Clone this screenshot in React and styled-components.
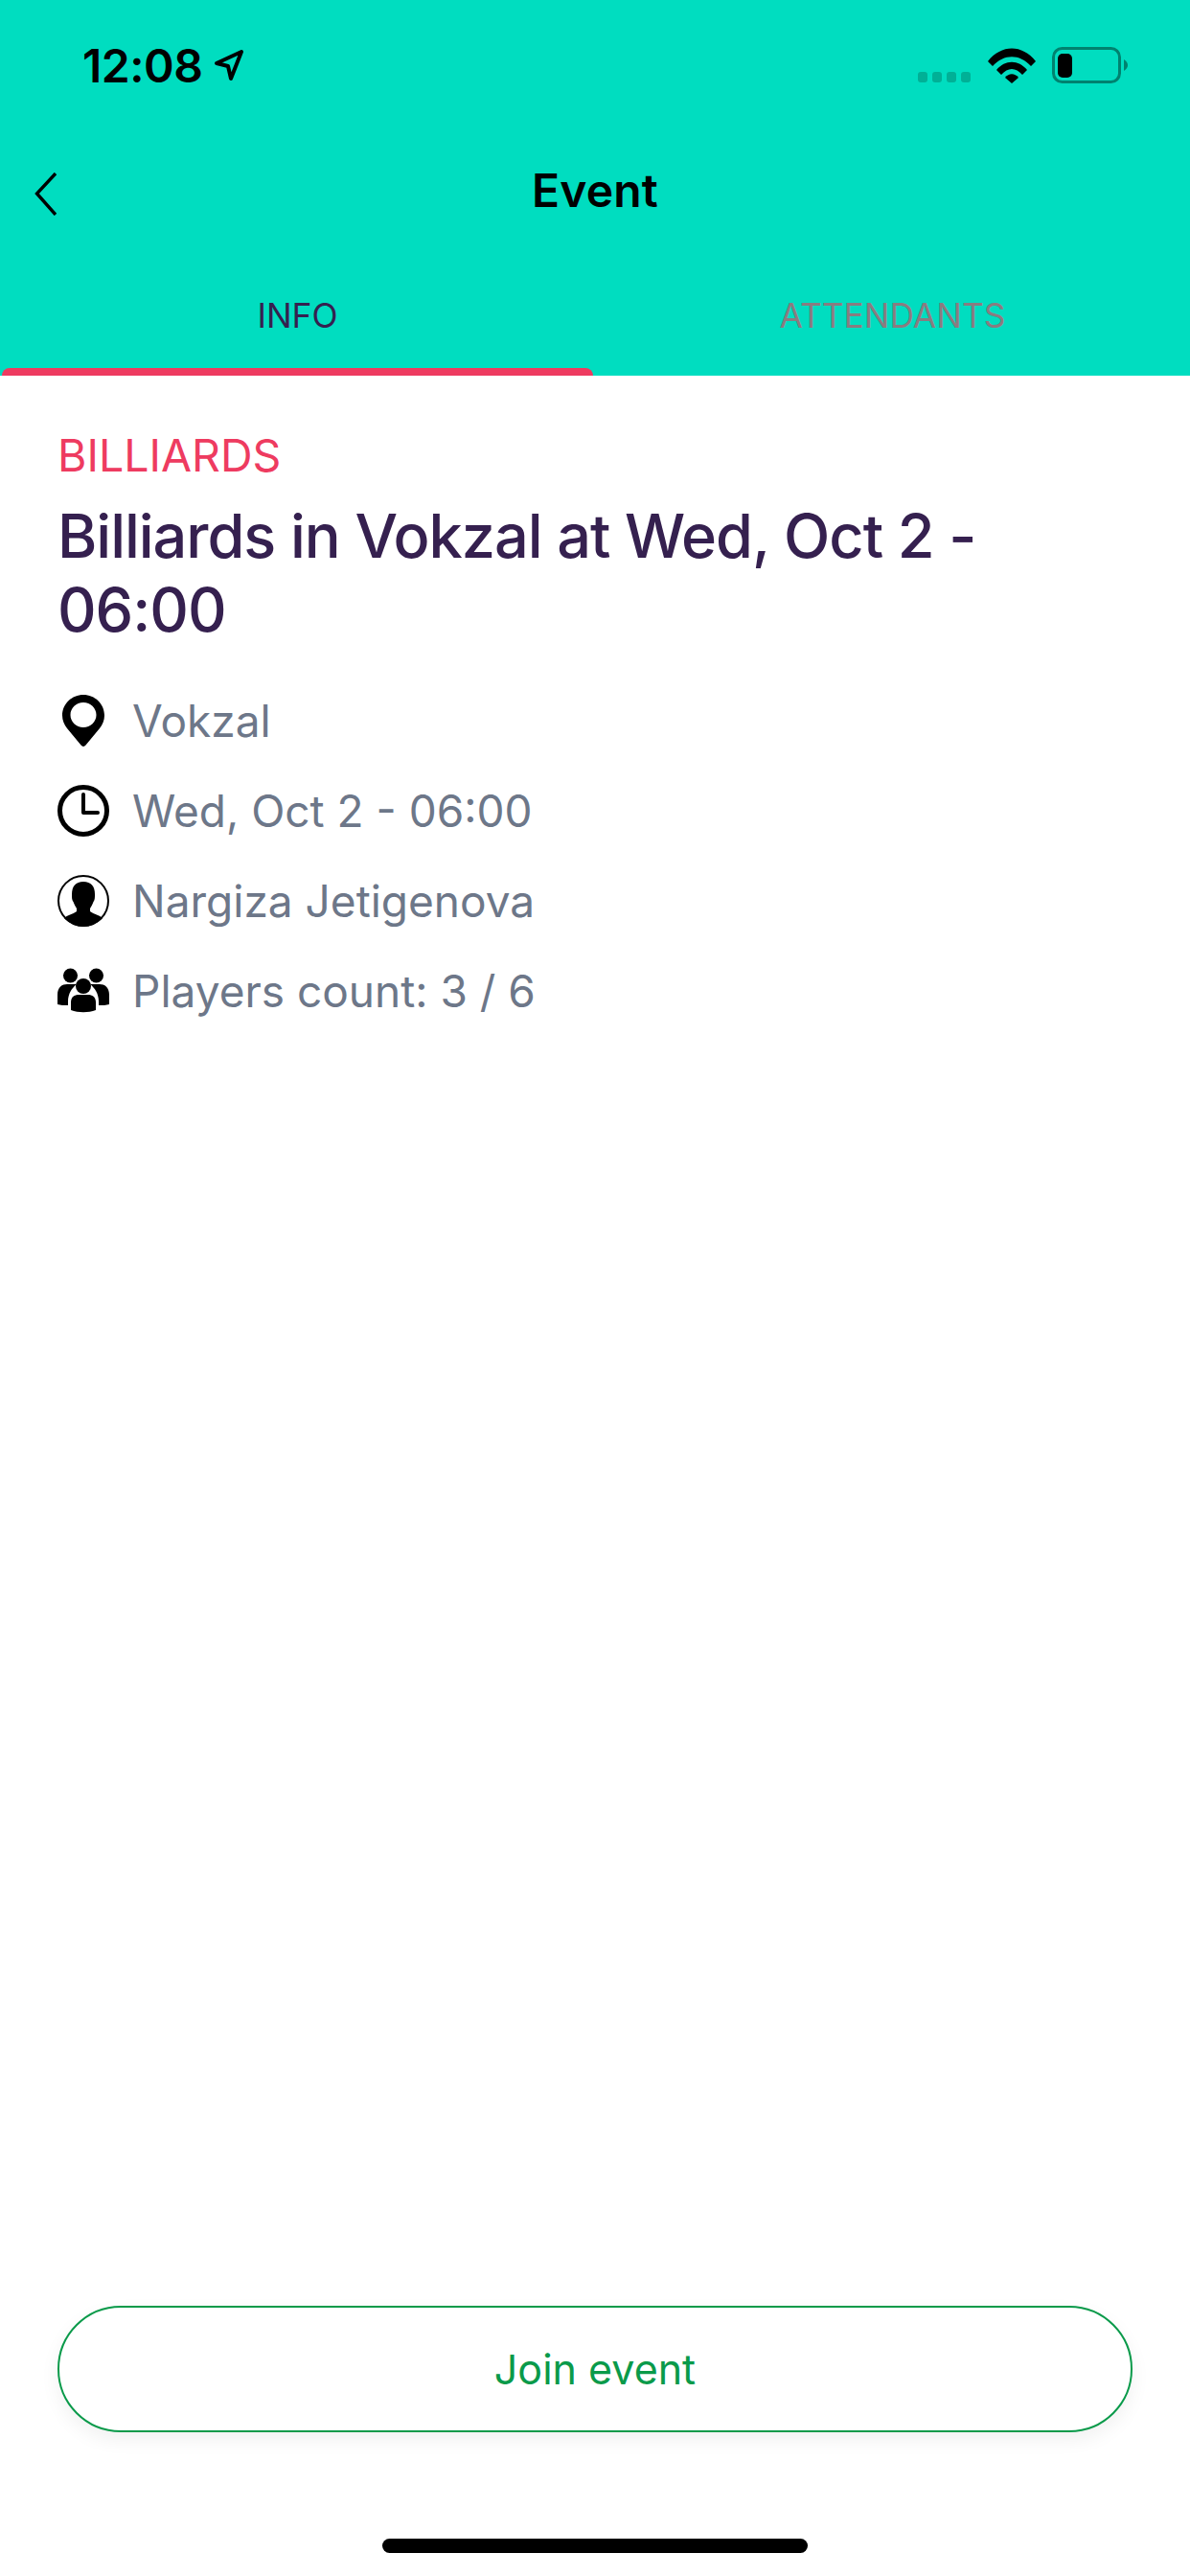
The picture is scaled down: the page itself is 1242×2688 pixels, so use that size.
import React from "react";
import styled, { createGlobalStyle } from "styled-components";

const GlobalStyle = createGlobalStyle`
  html, body {
    margin: 0;
    padding: 0;
    background: #ffffff;
  }
  * {
    box-sizing: border-box;
  }
`;

const Page = styled.div`
  display: flex;
  flex-direction: column;
  width: 1242px;
  height: 2688px;
  background: #ffffff;
  font-family: Inter, "Liberation Sans", sans-serif;
`;

const Header = styled.header`
  display: flex;
  flex-direction: column;
  height: 392px;
  background: #00ddc0;
`;

const StatusBar = styled.div`
  display: flex;
  justify-content: space-between;
  align-items: center;
  height: 136px;
  padding: 0 65px 0 86px;
`;

const Time = styled.div`
  display: flex;
  align-items: center;
  gap: 12px;
  font-size: 48px;
  font-weight: 600;
  letter-spacing: -0.5px;
  color: #000000;
`;

const StatusIcons = styled.div`
  display: flex;
  align-items: center;
  gap: 17px;
`;

const NavBar = styled.div`
  display: grid;
  grid-template-columns: 150px 1fr 150px;
  align-items: center;
  height: 124px;
`;

const BackButton = styled.div`
  display: flex;
  padding: 8px 0 0 36px;
`;

const Title = styled.h1`
  margin: 0;
  text-align: center;
  font-size: 48px;
  font-weight: 600;
  letter-spacing: 0.2px;
  color: #000000;
`;

const Tabs = styled.div`
  display: grid;
  flex: 1;
  grid-template-columns: 1fr 1fr;
`;

const Tab = styled.div`
  display: flex;
  flex-direction: column;
  justify-content: flex-end;
  align-items: center;
  font-size: 35.4px;
  color: ${(p) => (p.$active ? "#35204f" : "#897c80")};
`;

const Indicator = styled.div`
  align-self: stretch;
  height: 8px;
  margin: 33px 2px 0 2px;
  border-radius: 8px 8px 0 0;
  background: ${(p) => (p.$active ? "#ee3b60" : "transparent")};
`;

const Content = styled.main`
  display: flex;
  flex: 1;
  flex-direction: column;
  padding: 57px 60px 0;
`;

const Category = styled.div`
  font-size: 46.5px;
  line-height: 52px;
  color: #ee3b60;
`;

const EventTitle = styled.h2`
  margin: 20px 0 0;
  font-size: 63px;
  font-weight: 500;
  line-height: 77px;
  letter-spacing: -1.05px;
  color: #35204f;
`;

const InfoList = styled.div`
  display: flex;
  flex-direction: column;
  gap: 40px;
  margin-top: 50px;
`;

const InfoRow = styled.div`
  display: flex;
  align-items: center;
  gap: 24px;
  height: 54px;
  font-size: 46px;
  color: #6d7789;
`;

const IconBox = styled.svg`
  flex: none;
  width: 54px;
  height: 54px;
`;

const Footer = styled.footer`
  display: flex;
  flex-direction: column;
  align-items: center;
  height: 282px;
  padding: 0 60px;
`;

const JoinButton = styled.button`
  width: 100%;
  height: 132px;
  border: 2px solid #0a9a4a;
  border-radius: 66px;
  background: #ffffff;
  box-shadow: 0 8px 20px rgba(0, 0, 0, 0.06);
  font-family: inherit;
  font-size: 43px;
  color: #0a9a4a;
`;

const HomeBar = styled.div`
  width: 444px;
  height: 15px;
  margin-top: 111px;
  border-radius: 8px;
  background: #000000;
`;

function LocationArrow() {
  return (
    <svg width="32" height="34" viewBox="0 0 32 34">
      <path
        d="M3 15 L29 3 L18 31 L15 18 Z"
        fill="none"
        stroke="#000"
        strokeWidth="4"
        strokeLinejoin="round"
      />
    </svg>
  );
}

function SignalDots() {
  return (
    <svg width="56" height="36" viewBox="0 0 56 36">
      {[0, 15, 30, 45].map((x) => (
        <rect key={x} x={x} y="25" width="10" height="11" rx="3" fill="#00b096" />
      ))}
    </svg>
  );
}

function Wifi() {
  return (
    <svg width="50" height="37" viewBox="0 0 50 37">
      <path d="M0 14 C14 -4 36 -4 50 14 L45 19 C33 6 17 6 5 19 Z" fill="#000" />
      <path d="M9 23 C18 12 32 12 41 23 L36 28 C29 20 21 20 14 28 Z" fill="#000" />
      <path d="M18 31 C22 26 28 26 32 31 L25 37 Z" fill="#000" />
    </svg>
  );
}

function Battery() {
  return (
    <svg width="79" height="38" viewBox="0 0 79 38">
      <rect x="1.5" y="1.5" width="69" height="35" rx="9" fill="none" stroke="#00826f" strokeWidth="3" />
      <rect x="6" y="7" width="15" height="25" rx="5" fill="#000" />
      <path d="M75 13 C78 15 79 17 79 19 C79 21 78 23 75 25 Z" fill="#00826f" />
    </svg>
  );
}

function Chevron() {
  return (
    <svg width="23" height="45" viewBox="0 0 23 45">
      <path d="M22 1 L2.5 22 L22 44" fill="none" stroke="#000" strokeWidth="3.4" />
    </svg>
  );
}

function PinIcon() {
  return (
    <IconBox viewBox="0 0 54 54">
      <path
        fillRule="evenodd"
        d="M27 0 C39 0 49 9.5 49 21.5 C49 27 47 31 44 35 L29.5 52.5 C28 54.4 26 54.4 24.5 52.5 L10 35 C7 31 5 27 5 21.5 C5 9.5 15 0 27 0 Z M27 8 C19.5 8 13.5 13.8 13.5 21 C13.5 28.2 19.5 34 27 34 C34.5 34 40.5 28.2 40.5 21 C40.5 13.8 34.5 8 27 8 Z"
        fill="#000"
      />
    </IconBox>
  );
}

function ClockIcon() {
  return (
    <IconBox viewBox="0 0 54 54">
      <circle cx="27" cy="27" r="24.5" fill="none" stroke="#000" strokeWidth="5" />
      <path
        d="M27 10 V29 H42"
        fill="none"
        stroke="#000"
        strokeWidth="4"
        strokeLinecap="round"
        strokeLinejoin="round"
      />
    </IconBox>
  );
}

function PersonIcon() {
  return (
    <IconBox viewBox="0 0 54 54">
      <defs>
        <clipPath id="personClip">
          <circle cx="27" cy="27" r="27" />
        </clipPath>
      </defs>
      <circle cx="27" cy="27" r="26" fill="#fff" stroke="#000" strokeWidth="2" />
      <g clipPath="url(#personClip)">
        <path
          d="M27 7 C35 7 39 12 39 20 C39 24 39 26 37.5 28 C36.5 31 35 33 34 35 L34 38 C38 41 44 42 47 45 L47 54 L7 54 L7 45 C10 42 16 41 20 38 L20 35 C19 33 17.5 31 16.5 28 C15 26 15 24 15 20 C15 12 19 7 27 7 Z"
          fill="#000"
        />
      </g>
    </IconBox>
  );
}

function GroupIcon() {
  return (
    <IconBox viewBox="0 0 54 54">
      <circle cx="13.5" cy="11" r="7.5" fill="#000" />
      <circle cx="40.5" cy="11" r="7.5" fill="#000" />
      <path d="M0 41 L0 31 C0 23 5 20 10 20 L20 20 C15 24 11 30 11 38 L11 42 C7 42 3 42 0 41 Z" fill="#000" />
      <path d="M54 41 L54 31 C54 23 49 20 44 20 L34 20 C39 24 43 30 43 38 L43 42 C47 42 51 42 54 41 Z" fill="#000" />
      <circle cx="27" cy="22" r="8" fill="#000" />
      <path d="M14 47 L14 39 C14 33 18 31 22 31 L32 31 C36 31 40 33 40 39 L40 47 C32 50 22 50 14 47 Z" fill="#000" />
    </IconBox>
  );
}

const infoRows = [
  { icon: <PinIcon />, text: "Vokzal" },
  { icon: <ClockIcon />, text: "Wed, Oct 2 - 06:00" },
  { icon: <PersonIcon />, text: "Nargiza Jetigenova" },
  { icon: <GroupIcon />, text: "Players count: 3 / 6" },
];

export default function App() {
  return (
    <Page>
      <GlobalStyle />
      <Header>
        <StatusBar>
          <Time>
            12:08
            <LocationArrow />
          </Time>
          <StatusIcons>
            <SignalDots />
            <Wifi />
            <Battery />
          </StatusIcons>
        </StatusBar>
        <NavBar>
          <BackButton>
            <Chevron />
          </BackButton>
          <Title>Event</Title>
        </NavBar>
        <Tabs>
          <Tab $active>
            INFO
            <Indicator $active />
          </Tab>
          <Tab>
            ATTENDANTS
            <Indicator />
          </Tab>
        </Tabs>
      </Header>
      <Content>
        <Category>BILLIARDS</Category>
        <EventTitle>
          Billiards in Vokzal at Wed, Oct 2 -
          <br />
          06:00
        </EventTitle>
        <InfoList>
          {infoRows.map((row) => (
            <InfoRow key={row.text}>
              {row.icon}
              {row.text}
            </InfoRow>
          ))}
        </InfoList>
      </Content>
      <Footer>
        <JoinButton>Join event</JoinButton>
        <HomeBar />
      </Footer>
    </Page>
  );
}
